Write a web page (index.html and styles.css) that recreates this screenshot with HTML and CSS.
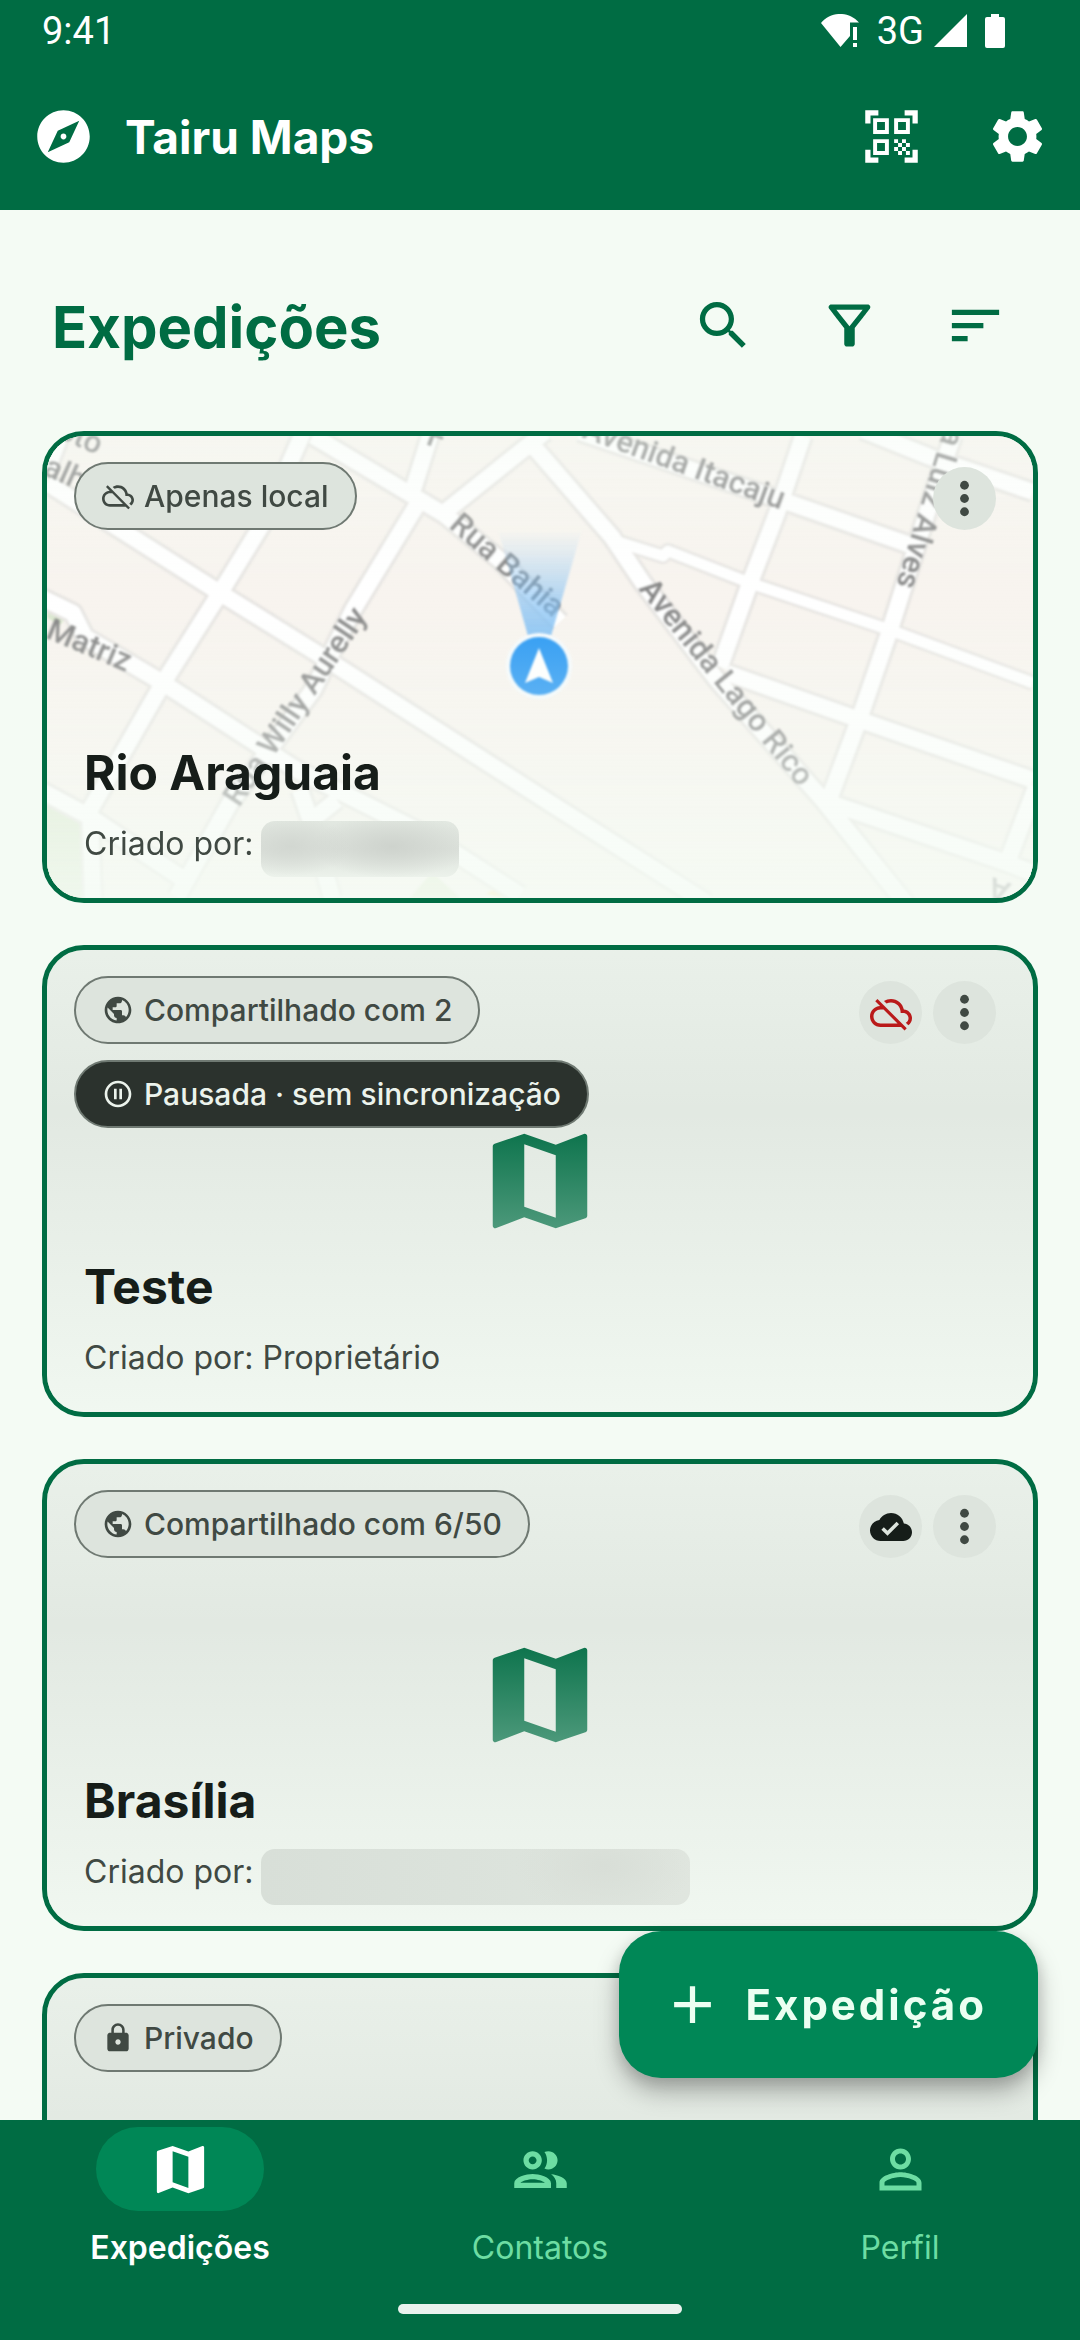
FILE: index.html
```html
<!DOCTYPE html>
<html lang="pt-BR">
<head>
<meta charset="utf-8">
<meta name="viewport" content="width=device-width, initial-scale=1">
<title>Tairu Maps</title>
<link rel="stylesheet" href="styles.css">
</head>
<body>
<svg class="sprite" aria-hidden="true">
  <symbol id="i-explore" viewBox="0 0 24 24"><path d="M12 10.9c-.61 0-1.1.49-1.1 1.1s.49 1.1 1.1 1.1c.61 0 1.1-.49 1.1-1.1s-.49-1.1-1.1-1.1zM12 2C6.48 2 2 6.48 2 12s4.48 10 10 10 10-4.48 10-10S17.52 2 12 2zm2.19 12.19L6 18l3.81-8.19L18 6l-3.81 8.19z"/></symbol>
  <symbol id="i-qr" viewBox="0 0 24 24"><path d="M9.5 6.5v3h-3v-3h3M11 5H5v6h6V5zM9.5 14.5v3h-3v-3h3M11 13H5v6h6v-6zM17.5 6.5v3h-3v-3h3M19 5h-6v6h6V5zM13 13h1.5v1.500H13V13zM14.500 14.500H16V16h-1.500v-1.500zM16 13h1.500v1.500H16V13zM13 16h1.500v1.500H13V16zM14.500 17.500H16V19h-1.500v-1.500zM16 16h1.500v1.500H16V16zM17.500 14.500H19V16h-1.500v-1.500zM17.500 17.500H19V19h-1.500v-1.500zM22 7h-2V4h-3V2h5v5zM22 22v-5h-2v3h-3v2h5zM2 22h5v-2H4v-3H2v5zM2 2v5h2V4h3V2H2z"/></symbol>
  <symbol id="i-settings" viewBox="0 0 24 24"><path d="M19.14 12.940c.04-.3.06-.61.06-.94 0-.32-.02-.64-.07-.94l2.030-1.580c.18-.14.23-.41.12-.61l-1.920-3.320c-.12-.22-.37-.29-.59-.22l-2.390.96c-.5-.38-1.030-.7-1.620-.94l-.36-2.540c-.04-.24-.24-.41-.48-.41h-3.840c-.24 0-.43.17-.47.41l-.36 2.540c-.59.24-1.130.57-1.620.94l-2.390-.96c-.22-.08-.47 0-.59.22L2.740 8.870c-.12.21-.08.47.12.61l2.030 1.580c-.05.3-.09.63-.09.94s.02.64.07.94l-2.030 1.580c-.18.14-.23.41-.12.61l1.920 3.320c.12.22.37.29.59.22l2.390-.96c.5.38 1.030.7 1.620.94l.36 2.540c.05.24.24.41.48.41h3.840c.24 0 .44-.17.47-.41l.36-2.540c.59-.24 1.130-.56 1.620-.94l2.390.96c.22.08.47 0 .59-.22l1.920-3.320c.12-.22.07-.47-.12-.61l-2.010-1.580zM12 15.600c-1.980 0-3.600-1.620-3.600-3.600s1.620-3.600 3.600-3.600 3.600 1.620 3.600 3.600-1.620 3.600-3.600 3.600z"/></symbol>
  <symbol id="i-search" viewBox="0 0 24 24"><path d="M15.5 14h-.79l-.28-.27C15.41 12.59 16 11.11 16 9.5 16 5.91 13.09 3 9.5 3S3 5.91 3 9.5 5.91 16 9.5 16c1.61 0 3.09-.59 4.23-1.57l.27.28v.79l5 4.99L20.49 19l-4.99-5zm-6 0C7.01 14 5 11.99 5 9.5S7.01 5 9.5 5 14 7.01 14 9.5 11.99 14 9.5 14z"/></symbol>
  <symbol id="i-filter" viewBox="0 0 24 24"><path d="M7 6h10l-5.01 6.3L7 6zm-2.75-.39C6.27 8.2 10 13 10 13v6c0 .55.45 1 1 1h2c.55 0 1-.45 1-1v-6s3.72-4.8 5.74-7.39c.51-.66.04-1.61-.79-1.61H5.04c-.83 0-1.3.95-.79 1.61z"/></symbol>
  <symbol id="i-sort" viewBox="0 0 24 24"><path d="M3 18h6v-2H3v2zM3 6v2h18V6H3zm0 7h12v-2H3v2z"/></symbol>
  <symbol id="i-cloud-off" viewBox="0 0 24 24"><path d="M19.35 10.04C18.67 6.59 15.64 4 12 4c-1.48 0-2.85.43-4.01 1.17l1.46 1.46C10.21 6.23 11.08 6 12 6c3.04 0 5.5 2.46 5.5 5.5v.5H19c1.66 0 3 1.34 3 3 0 1.13-.64 2.11-1.56 2.62l1.45 1.45C23.16 18.16 24 16.68 24 15c0-2.64-2.05-4.78-4.65-4.96zM3 5.27l2.75 2.74C2.56 8.15 0 10.77 0 14c0 3.31 2.69 6 6 6h11.73l2 2L21 20.73 4.27 4 3 5.27zM7.73 10l8 8H6c-2.21 0-4-1.79-4-4s1.79-4 4-4h1.73z"/></symbol>
  <symbol id="i-cloud-done" viewBox="0 0 24 24"><path d="M19.35 10.04C18.67 6.59 15.64 4 12 4 9.11 4 6.6 5.64 5.35 8.04 2.34 8.36 0 10.91 0 14c0 3.31 2.69 6 6 6h13c2.76 0 5-2.24 5-5 0-2.64-2.05-4.78-4.65-4.96zM10 17l-3.5-3.5 1.41-1.41L10 14.17 15.18 9l1.41 1.41L10 17z"/></symbol>
  <symbol id="i-public" viewBox="0 0 24 24"><path d="M12 2C6.48 2 2 6.48 2 12s4.48 10 10 10 10-4.48 10-10S17.52 2 12 2zm-1 17.93c-3.95-.49-7-3.85-7-7.93 0-.62.08-1.21.21-1.79L9 15v1c0 1.1.9 2 2 2v1.93zm6.9-2.54c-.26-.81-1-1.39-1.9-1.39h-1v-3c0-.55-.45-1-1-1H8v-2h2c.55 0 1-.45 1-1V7h2c1.1 0 2-.9 2-2v-.41c2.93 1.19 5 4.06 5 7.41 0 2.08-.8 3.97-2.1 5.39z"/></symbol>
  <symbol id="i-pause" viewBox="0 0 24 24"><path d="M9 16h2V8H9v8zm3-14C6.48 2 2 6.48 2 12s4.48 10 10 10 10-4.48 10-10S17.52 2 12 2zm0 18c-4.41 0-8-3.59-8-8s3.59-8 8-8 8 3.59 8 8-3.59 8-8 8zm1-4h2V8h-2v8z"/></symbol>
  <symbol id="i-lock" viewBox="0 0 24 24"><path d="M18 8h-1V6c0-2.76-2.24-5-5-5S7 3.24 7 6v2H6c-1.1 0-2 .9-2 2v10c0 1.1.9 2 2 2h12c1.1 0 2-.9 2-2V10c0-1.1-.9-2-2-2zm-6 9c-1.1 0-2-.9-2-2s.9-2 2-2 2 .9 2 2-.9 2-2 2zm3.1-9H8.9V6c0-1.71 1.39-3.1 3.1-3.1 1.71 0 3.1 1.39 3.1 3.1v2z"/></symbol>
  <symbol id="i-more" viewBox="0 0 24 24"><circle cx="12" cy="6" r="2"/><circle cx="12" cy="12" r="2"/><circle cx="12" cy="18" r="2"/></symbol>
  <symbol id="i-map" viewBox="0 0 24 24"><path d="M20.5 3l-.16.03L15 5.1 9 3 3.36 4.9c-.21.07-.36.25-.36.48V20.5c0 .28.22.5.5.5l.16-.03L9 18.9l6 2.1 5.64-1.9c.21-.07.36-.25.36-.48V3.5c0-.28-.22-.5-.5-.5zM15 19l-6-2.11V5l6 2.11V19z"/></symbol>
  <symbol id="i-add" viewBox="0 0 24 24"><path d="M19 13h-6v6h-2v-6H5v-2h6V5h2v6h6v2z"/></symbol>
  <symbol id="i-people" viewBox="0 0 24 24"><path d="M9 13.75c-2.34 0-7 1.17-7 3.5V19h14v-1.75c0-2.33-4.66-3.5-7-3.5zM4.34 17c.84-.58 2.87-1.25 4.66-1.25s3.82.67 4.66 1.25H4.34zM9 12c1.93 0 3.5-1.57 3.5-3.5S10.93 5 9 5 5.5 6.57 5.5 8.5 7.07 12 9 12zm0-5c.83 0 1.5.67 1.5 1.5S9.83 10 9 10s-1.5-.67-1.5-1.5S8.17 7 9 7zm7.04 6.81c1.16.84 1.96 1.96 1.96 3.44V19h4v-1.75c0-2.02-3.5-3.17-5.96-3.44zM15 12c1.93 0 3.5-1.57 3.5-3.5S16.93 5 15 5c-.54 0-1.04.13-1.5.35.63.89 1 1.98 1 3.15s-.37 2.26-1 3.15c.46.22.96.35 1.5.35z"/></symbol>
  <symbol id="i-person" viewBox="0 0 24 24"><path d="M12 5.9c1.16 0 2.1.94 2.1 2.1s-.94 2.1-2.1 2.1S9.9 9.16 9.9 8s.94-2.1 2.1-2.1m0 9c2.97 0 6.1 1.46 6.1 2.1v1.1H5.9V17c0-.64 3.13-2.1 6.1-2.1M12 4C9.79 4 8 5.79 8 8s1.79 4 4 4 4-1.79 4-4-1.79-4-4-4zm0 9c-2.67 0-8 1.34-8 4v3h16v-3c0-2.66-5.33-4-8-4z"/></symbol>
</svg>

<div class="app">
  <header class="top">
    <div class="status">
      <span class="status-time">9:41</span>
      <svg class="status-wifi" viewBox="0 0 38 33" aria-hidden="true"><path d="M0 9C10-3 28-3 38 8.500H29V22L19.500 33z"/><path d="M32 13h4v13h-4zM32 29h4v4h-4z"/></svg>
      <span class="status-net">3G</span>
      <svg class="status-signal" viewBox="0 0 33 33" aria-hidden="true"><path d="M33 0v33H0z"/></svg>
      <svg class="status-battery" viewBox="0 0 20 34" aria-hidden="true"><path d="M6 0h8v3h4a2 2 0 0 1 2 2v27a2 2 0 0 1-2 2H2a2 2 0 0 1-2-2V5a2 2 0 0 1 2-2h4z"/></svg>
    </div>
    <div class="appbar">
      <svg class="icon" aria-hidden="true"><use href="#i-explore"/></svg>
      <span class="appbar-title">Tairu Maps</span>
      <button class="icon-btn" type="button" aria-label="Ler código QR"><svg class="icon" aria-hidden="true"><use href="#i-qr"/></svg></button>
      <button class="icon-btn" type="button" aria-label="Configurações"><svg class="icon" aria-hidden="true"><use href="#i-settings"/></svg></button>
    </div>
  </header>

  <div class="content">
    <main class="scroll">
      <div class="heading">
        <h1>Expedições</h1>
        <button class="icon-btn" type="button" aria-label="Buscar"><svg class="icon" aria-hidden="true"><use href="#i-search"/></svg></button>
        <button class="icon-btn" type="button" aria-label="Filtrar"><svg class="icon" aria-hidden="true"><use href="#i-filter"/></svg></button>
        <button class="icon-btn" type="button" aria-label="Ordenar"><svg class="icon" aria-hidden="true"><use href="#i-sort"/></svg></button>
      </div>

      <div class="list">
        <article class="card">
          <svg class="card-map" viewBox="47 436 986 462" preserveAspectRatio="xMidYMid slice" aria-hidden="true">
            <defs>
              <linearGradient id="beam" x1="0" y1="0" x2="0" y2="1"><stop offset="0" stop-color="#7dbdf3" stop-opacity="0"/><stop offset="1" stop-color="#7dbdf3" stop-opacity=".9"/></linearGradient>
              <g id="roads">
                <path d="M47 483L220 593 323 657 550 803 707 903M303 433L263 523 220 593 163 683 90 810 93 900M313 436L420 500 445 515 500 560 560 622M430 436L413 490M420 500L353 610 313 690 230 803 177 897M445 512L545 432M535 448L612 537 643 583 717 680 823 800 907 905M790 503L910 545M580 432L790 503M803 436L777 513 750 583 720 667M863 430L930 457 1033 492M953 436L927 513 890 630 860 717 830 797M727 673L860 720 1033 780M830 803L1007 863 1033 873M1036 787L1007 863M40 597L73 613 85 637 163 683 297 770 430 837 520 895M40 790L90 817 180 877M300 790L312 825 332 898M312 820L337 800M60 436L47 470"/>
              </g>
              <path id="lane" d="M612 540L663 556 668 551 750 583 890 630 1033 683"/>
            </defs>
            <rect x="47" y="436" width="986" height="462" fill="#f8f4ef"/>
            <g class="map-soft">
              <path d="M40 800L82 825 88 898H40zM47 605L68 616 60 625 47 618z" fill="#dbe8cf"/>
              <path d="M410 898L432 872 460 898z" fill="#dfe9cd"/>
              <path d="M486 894L500 886 506 898z" fill="#fbe3a8"/>
              <use href="#roads" class="road-edge"/>
              <use href="#lane" class="lane-edge"/>
              <use href="#roads" class="road"/>
              <use href="#lane" class="lane"/>
            </g>
            <g class="map-labels">
              <text transform="translate(42 474) rotate(24)">alhã</text>
              <text transform="translate(97 455) rotate(24)" text-anchor="end">oto</text>
              <text transform="translate(126 672) rotate(23)" text-anchor="end">a Matriz</text>
              <text transform="translate(239 808) rotate(-56)">Rua Willy Aurelly</text>
              <text transform="translate(448 527) rotate(41)">Rua Bahia</text>
              <text transform="translate(581 437) rotate(20)">Avenida Itacaju</text>
              <text transform="translate(638 589) rotate(51)">Avenida Lago Rico</text>
              <text transform="translate(896 585) rotate(107)" text-anchor="end">a Luiz Alves</text>
              <text transform="translate(425 444) rotate(20)">F</text>
              <text transform="translate(1012 884) rotate(-160)">A</text>
            </g>
            <path d="M498 530H582L551 636H528z" fill="url(#beam)" class="map-soft"/>
            <g class="map-soft">
              <circle cx="539" cy="666" r="33" fill="#f5fafd"/>
              <circle cx="539" cy="666" r="29" fill="#2496f3"/>
              <path d="M539 648L553 683 539 677 525 683z" fill="#fff"/>
            </g>
          </svg>
          <div class="card-body">
            <div class="card-top">
              <div class="chips">
                <span class="chip"><svg aria-hidden="true"><use href="#i-cloud-off"/></svg>Apenas local</span>
              </div>
              <div class="actions">
                <button class="round" type="button" aria-label="Mais opções"><svg class="dots" aria-hidden="true"><use href="#i-more"/></svg></button>
              </div>
            </div>
            <h2>Rio Araguaia</h2>
            <p class="author">Criado por: <span class="redact redact-short"></span></p>
          </div>
        </article>

        <article class="card">
          <svg class="card-icon" aria-hidden="true"><use href="#i-map"/></svg>
          <div class="card-body">
            <div class="card-top">
              <div class="chips">
                <span class="chip"><svg aria-hidden="true"><use href="#i-public"/></svg>Compartilhado com 2</span>
                <span class="chip chip-dark"><svg aria-hidden="true"><use href="#i-pause"/></svg>Pausada · sem sincronização</span>
              </div>
              <div class="actions">
                <span class="round round-error"><svg aria-hidden="true"><use href="#i-cloud-off"/></svg></span>
                <button class="round" type="button" aria-label="Mais opções"><svg class="dots" aria-hidden="true"><use href="#i-more"/></svg></button>
              </div>
            </div>
            <h2>Teste</h2>
            <p class="author">Criado por: Proprietário</p>
          </div>
        </article>

        <article class="card">
          <svg class="card-icon" aria-hidden="true"><use href="#i-map"/></svg>
          <div class="card-body">
            <div class="card-top">
              <div class="chips">
                <span class="chip"><svg aria-hidden="true"><use href="#i-public"/></svg>Compartilhado com 6/50</span>
              </div>
              <div class="actions">
                <span class="round round-done"><svg aria-hidden="true"><use href="#i-cloud-done"/></svg></span>
                <button class="round" type="button" aria-label="Mais opções"><svg class="dots" aria-hidden="true"><use href="#i-more"/></svg></button>
              </div>
            </div>
            <h2>Brasília</h2>
            <p class="author">Criado por: <span class="redact redact-long"></span></p>
          </div>
        </article>

        <article class="card">
          <div class="card-body">
            <div class="card-top">
              <div class="chips">
                <span class="chip"><svg aria-hidden="true"><use href="#i-lock"/></svg>Privado</span>
              </div>
            </div>
          </div>
        </article>
      </div>
    </main>
    <button class="fab" type="button"><svg class="icon" aria-hidden="true"><use href="#i-add"/></svg>Expedição</button>
  </div>

  <nav class="bottom">
    <div class="tabs">
      <a class="tab tab-active" href="#expedicoes"><span class="pill"><svg class="icon" aria-hidden="true"><use href="#i-map"/></svg></span>Expedições</a>
      <a class="tab" href="#contatos"><span class="pill"><svg class="icon" aria-hidden="true"><use href="#i-people"/></svg></span>Contatos</a>
      <a class="tab" href="#perfil"><span class="pill"><svg class="icon" aria-hidden="true"><use href="#i-person"/></svg></span>Perfil</a>
    </div>
    <div class="home-bar"></div>
  </nav>
</div>
</body>
</html>
```

FILE: styles.css
```css
:root {
  --green: #006c43;
  --green-mid: #008756;
  --surface: #f4fbf4;
  --chip: #dde4dd;
  --ink: #161d19;
  --ink-soft: #404943;
  --outline: #6f7972;
}

* { box-sizing: border-box; }

body {
  margin: 0;
  background: var(--surface);
  color: var(--ink);
  font-family: Inter, "Noto Sans", sans-serif;
}

button {
  border: 0;
  padding: 0;
  background: none;
  color: inherit;
  font: inherit;
}

svg { fill: currentColor; flex: none; }

.sprite { position: absolute; width: 0; height: 0; }

.app { display: flex; flex-direction: column; height: 100vh; }

.icon { display: block; width: 63px; height: 63px; }

.icon-btn {
  display: grid;
  place-items: center;
  width: 126px;
  height: 126px;
}

/* Header */
.top { background: var(--green); color: #fff; }

.status {
  display: flex;
  align-items: center;
  height: 63px;
  padding: 0 75px 2px 42px;
  font: 400 38px/40px Roboto, sans-serif;
}
.status-time { margin-right: auto; }
.status-wifi { width: 38px; height: 33px; margin-right: 18px; }
.status-net { margin-right: 10px; }
.status-signal { width: 33px; height: 33px; margin-right: 18px; }
.status-battery { width: 20px; height: 34px; }

.appbar {
  display: flex;
  align-items: center;
  height: 147px;
  padding-left: 32px;
}
.appbar-title {
  flex: 1;
  margin-left: 30px;
  font-size: 46px;
  font-weight: 700;
}

/* Content */
.content { position: relative; flex: 1; min-height: 0; }

.scroll {
  height: 100%;
  padding: 52px 42px 0;
  overflow-y: auto;
  scrollbar-width: none;
}

.heading {
  display: flex;
  align-items: center;
  padding-left: 10px;
  margin-bottom: 43px;
  color: var(--green);
}
h1 { flex: 1; margin: 0; padding-top: 4px; font-size: 58px; font-weight: 700; line-height: 72px; }

.list { display: flex; flex-direction: column; gap: 42px; }

.card {
  position: relative;
  display: flex;
  min-height: 472px;
  border: 5px solid var(--green);
  border-radius: 42px;
  background: #e2e9e2;
  overflow: hidden;
}

.card-map { position: absolute; inset: 0; width: 100%; height: 100%; }

.card-icon {
  position: absolute;
  inset: 0;
  margin: auto;
  width: 126px;
  height: 126px;
  color: var(--green);
}

.card-body {
  position: relative;
  flex: 1;
  display: flex;
  flex-direction: column;
  padding: 26px 37px 21px 27px;
  background: linear-gradient(rgba(244, 251, 244, .4), rgba(244, 251, 244, 0) 35%, rgba(244, 251, 244, .8));
}

.card-top { display: flex; justify-content: space-between; margin-bottom: auto; }

.chips { display: flex; flex-direction: column; align-items: flex-start; gap: 16px; }

.chip {
  display: flex;
  align-items: center;
  gap: 10px;
  height: 68px;
  padding: 0 26px;
  border: 2px solid var(--outline);
  border-radius: 34px;
  background: var(--chip);
  color: var(--ink-soft);
  font-size: 30px;
  font-weight: 500;
}
.chip svg { width: 32px; height: 32px; }
.chip-dark { background: #2b322d; color: #ecf3ec; }

.actions { display: flex; gap: 11px; padding-top: 5px; }

.round {
  display: grid;
  place-items: center;
  width: 63px;
  height: 63px;
  border-radius: 50%;
  background: var(--chip);
  color: var(--ink-soft);
}
.round svg { width: 42px; height: 42px; }
.round .dots { width: 53px; height: 53px; }
.round-error { color: #ba1a1a; }
.round-done { color: var(--ink); }

h2 {
  margin: 0 0 20px 10px;
  font-size: 48px;
  font-weight: 700;
  line-height: 56px;
}

.author {
  display: flex;
  gap: 8px;
  min-height: 56px;
  margin: 0 0 0 10px;
  color: var(--ink-soft);
  font-size: 32px;
  line-height: 46px;
}

.redact { height: 56px; border-radius: 14px; }
.redact-short {
  width: 198px;
  background:
    radial-gradient(ellipse 60px 30px at 15% 45%, #d2d7d1, transparent),
    radial-gradient(ellipse 80px 32px at 66% 45%, #ced3cd, transparent),
    linear-gradient(#e2e8e1, #dce1db 50%, #ecf2eb);
}
.redact-long {
  width: 429px;
  background:
    radial-gradient(ellipse 90px 50px at 80% 30%, #d8ded7, transparent),
    linear-gradient(90deg, #d8dfd8, #dce3dc 60%, #e0e6df);
}

/* Map artwork */
.map-soft { filter: blur(1px); }
.road-edge, .lane-edge, .road, .lane { fill: none; stroke-linejoin: round; }
.road-edge { stroke: #e7e5e2; stroke-width: 22px; }
.lane-edge { stroke: #e7e5e2; stroke-width: 16px; }
.road { stroke: #fff; stroke-width: 16px; }
.lane { stroke: #fff; stroke-width: 11px; }
.map-labels {
  fill: #848484;
  font: 500 31px Roboto, sans-serif;
  filter: blur(1px);
}

/* Floating action */
.fab {
  position: absolute;
  right: 42px;
  bottom: 42px;
  display: flex;
  align-items: center;
  gap: 22px;
  height: 147px;
  padding: 0 51px 0 42px;
  border-radius: 42px;
  background: var(--green-mid);
  color: #ecfff2;
  font-size: 42px;
  font-weight: 700;
  letter-spacing: 3px;
  box-shadow: 0 14px 24px rgba(0, 0, 0, .28), 0 4px 16px rgba(0, 0, 0, .12);
}

/* Bottom navigation */
.bottom { background: var(--green); padding: 7px 0 26px; }

.tabs { display: grid; grid-template-columns: repeat(3, 1fr); margin-bottom: 36px; }

.tab {
  display: flex;
  flex-direction: column;
  align-items: center;
  gap: 17px;
  color: #6ddda3;
  font-size: 32px;
  line-height: 40px;
  text-decoration: none;
}
.pill {
  display: grid;
  place-items: center;
  width: 168px;
  height: 84px;
  border-radius: 42px;
}
.tab-active { color: #fff; font-weight: 600; }
.tab-active .pill { background: var(--green-mid); }

.home-bar {
  width: 284px;
  height: 10px;
  margin: 0 auto;
  border-radius: 5px;
  background: #e9f2ee;
}
```
